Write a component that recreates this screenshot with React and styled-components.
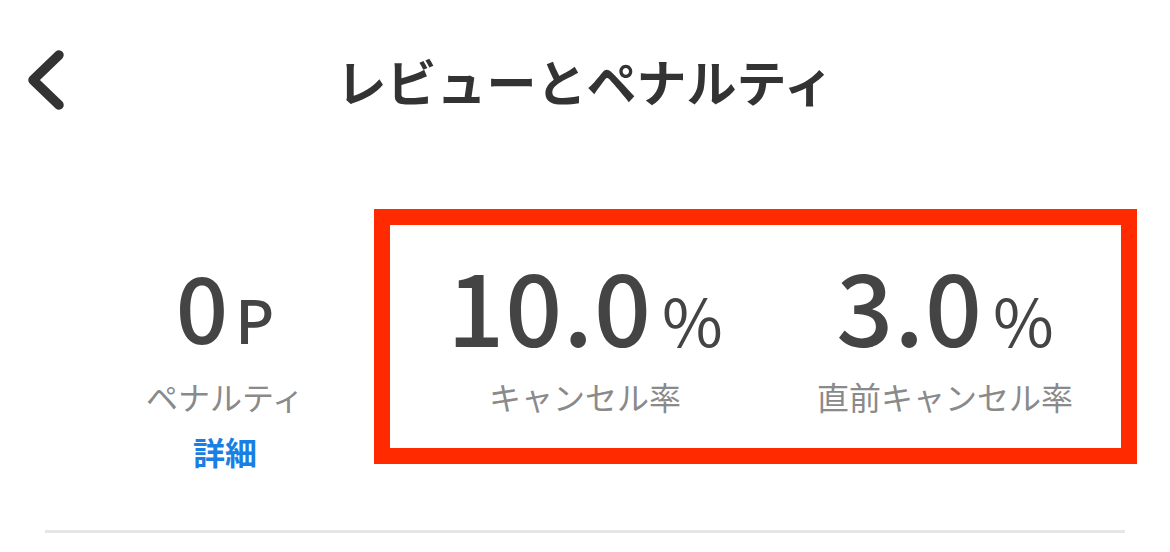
import React from "react";
import styled, { createGlobalStyle } from "styled-components";

const GlobalStyle = createGlobalStyle`
  body {
    margin: 0;
    background: #fff;
    font-family: "Noto Sans CJK JP", "Noto Sans", sans-serif;
  }
`;

const Page = styled.div`
  width: 1170px;
  height: 552px;
  overflow: hidden;
  background: #fff;
`;

const Header = styled.header`
  display: grid;
  grid-template-columns: 1fr auto 1fr;
  align-items: center;
  height: 160px;
`;

const BackButton = styled.button`
  justify-self: start;
  display: flex;
  margin-left: 24px;
  padding: 0;
  border: 0;
  background: none;
  cursor: pointer;
`;

const Title = styled.h1`
  margin: 0;
  font-size: 50px;
  font-weight: 700;
  color: #333;
  letter-spacing: 0;
`;

const Stats = styled.section`
  display: grid;
  grid-template-columns: 360px 720px;
  margin: 0 45px;
  padding: 94px 0 57px;
  border-bottom: 3px solid #e6e6e6;
`;

const Highlight = styled.div`
  position: relative;
  display: grid;
  grid-template-columns: 1fr 1fr;

  &::after {
    content: "";
    position: absolute;
    top: -45px;
    bottom: 9px;
    left: -31px;
    right: -12px;
    border: 16px solid #ff2a00;
    pointer-events: none;
  }
`;

const Stat = styled.div`
  display: flex;
  flex-direction: column;
  align-items: center;
`;

const Value = styled.div`
  height: 100px;
  line-height: 100px;
  color: #444;
  white-space: nowrap;
`;

const Number = styled.span`
  font-size: ${({ small }) => (small ? "92px" : "100px")};
  font-weight: 500;
  letter-spacing: 1px;
`;

const Unit = styled.span`
  margin-left: ${({ gap }) => gap}px;
  font-size: ${({ size }) => size}px;
  font-weight: ${({ weight }) => weight || 400};
`;

const Label = styled.div`
  margin-top: 20px;
  font-size: 32px;
  line-height: 44px;
  color: #8a8a8a;
`;

const DetailLink = styled.a`
  margin-top: 11px;
  font-size: 32px;
  line-height: 44px;
  font-weight: 700;
  color: #1a7fe3;
  text-decoration: none;
`;

const ChevronLeft = () => (
  <svg width="46" height="66" viewBox="0 0 46 66" fill="none">
    <path
      d="M35 8 L9 33 L35 58"
      stroke="#333"
      strokeWidth="9.5"
      strokeLinecap="round"
      strokeLinejoin="round"
    />
  </svg>
);

export default function App() {
  return (
    <Page>
      <GlobalStyle />
      <Header>
        <BackButton aria-label="戻る">
          <ChevronLeft />
        </BackButton>
        <Title>レビューとペナルティ</Title>
        <div />
      </Header>
      <Stats>
        <Stat>
          <Value>
            <Number small>0</Number>
            <Unit size={60} gap={6} weight={500}>P</Unit>
          </Value>
          <Label>ペナルティ</Label>
          <DetailLink href="#">詳細</DetailLink>
        </Stat>
        <Highlight>
          <Stat>
            <Value>
              <Number>10.0</Number>
              <Unit size={66} gap={10}>%</Unit>
            </Value>
            <Label>キャンセル率</Label>
          </Stat>
          <Stat>
            <Value>
              <Number>3.0</Number>
              <Unit size={66} gap={10}>%</Unit>
            </Value>
            <Label>直前キャンセル率</Label>
          </Stat>
        </Highlight>
      </Stats>
    </Page>
  );
}
